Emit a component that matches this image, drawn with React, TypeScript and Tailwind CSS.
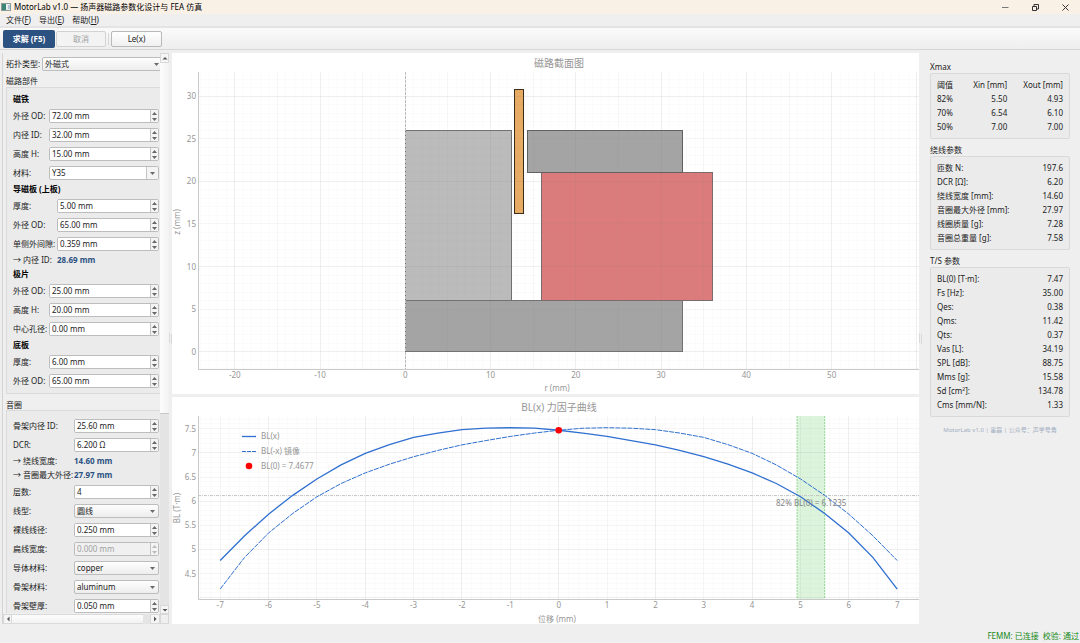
import React, { useId } from 'react';
import clsx from 'clsx';

const range = (from: number, to: number, step: number) =>
  Array.from({ length: Math.round((to - from) / step) + 1 }, (_, i) => from + i * step);

/* ---------- Form controls ---------- */

interface RowProps {
  label: string;
  labelClass: string;
  children: (id: string) => React.ReactNode;
}

const Row: React.FC<RowProps> = ({ label, labelClass, children }) => {
  const id = useId();
  return (
    <div className="flex h-3.5 items-center">
      <label htmlFor={id} className={clsx('shrink-0 whitespace-nowrap', labelClass)}>
        {label}
      </label>
      {children(id)}
    </div>
  );
};

interface FieldProps {
  label: string;
  value: string;
  labelClass: string;
  disabled?: boolean;
}

const SpinField: React.FC<FieldProps> = ({ label, value, labelClass, disabled }) => (
  <Row label={label} labelClass={labelClass}>
    {(id) => (
      <div className="flex h-3.5 min-w-0 flex-1 overflow-hidden rounded-xs border border-[#bdbdbd] bg-white">
        <input
          id={id}
          type="text"
          defaultValue={value}
          disabled={disabled}
          className="min-w-0 flex-1 bg-white pl-0.5 leading-3 outline-none disabled:bg-[#f0f0f0] disabled:text-[#a0a0a0]"
        />
        <div className="flex w-2 shrink-0 flex-col border-l border-[#c4c4c4] bg-[#f4f4f4]">
          <button type="button" aria-label={`${label} +`} disabled={disabled} className="flex flex-1 items-center justify-center text-[#666] disabled:text-[#bbb]">
            <svg width="5" height="3" viewBox="0 0 5 3"><path d="M0 3 2.500 0 5 3z" fill="currentColor" /></svg>
          </button>
          <button type="button" aria-label={`${label} -`} disabled={disabled} className="flex flex-1 items-center justify-center text-[#666] disabled:text-[#bbb]">
            <svg width="5" height="3" viewBox="0 0 5 3"><path d="M0 0 2.500 3 5 0z" fill="currentColor" /></svg>
          </button>
        </div>
      </div>
    )}
  </Row>
);

interface SelectFieldProps extends FieldProps {
  editable?: boolean;
  grow?: string;
}

const SelectField: React.FC<SelectFieldProps> = ({ label, value, labelClass, editable, grow = 'flex-1 min-w-0' }) => (
  <Row label={label} labelClass={labelClass}>
    {(id) => (
      <div className={clsx('relative h-3.5', grow)}>
        <select
          id={id}
          defaultValue={value}
          className={clsx(
            'block h-full w-full appearance-none rounded-xs border border-[#bdbdbd] pl-0.5 outline-none',
            editable ? 'bg-white' : 'bg-linear-to-b from-[#fefefe] to-[#ededed]'
          )}
        >
          <option>{value}</option>
        </select>
        <span
          className={clsx(
            'pointer-events-none absolute inset-y-px right-px flex items-center justify-center',
            editable ? 'w-3 border-l border-[#c4c4c4] bg-[#f4f4f4]' : 'w-3'
          )}
        >
          <svg width="5" height="3" viewBox="0 0 5 3"><path d="M0 0 2.5 3 5 0z" fill="#6a6a6a" /></svg>
        </span>
      </div>
    )}
  </Row>
);

const SubHeading: React.FC<{ children: React.ReactNode }> = ({ children }) => (
  <h3 className="h-[9px] font-bold leading-[7px] text-black">{children}</h3>
);

const Derived: React.FC<{ label: string; value: string; labelClass: string }> = ({ label, value, labelClass }) => (
  <div className="flex h-[9px] whitespace-nowrap leading-[7px]">
    <span className={clsx('shrink-0', labelClass)}>{label}</span>
    <output className="font-bold text-[#2c5282]">{value}</output>
  </div>
);

/* ---------- Sidebar ---------- */

const Arrow: React.FC<{ d: string }> = ({ d }) => (
  <svg width="6" height="6" viewBox="0 0 6 6"><path d={d} fill="#555" /></svg>
);

const scrollButton = 'flex shrink-0 items-center justify-center border border-[#d8d8d8] bg-[#f5f5f5]';

const Sidebar: React.FC = () => (
  <aside className="ml-0.5 flex w-[167px] shrink-0 flex-col border-l border-[#d4d4d4]">
    <div className="flex flex-1">
      <div className="min-w-0 flex-1 overflow-hidden pt-1 pl-[3px]">
        <SelectField label="拓扑类型:" value="外磁式" labelClass="w-[36px]" grow="w-[121px] shrink-0" />

        <h2 className="mt-[5px] mb-px leading-[10px]">磁路部件</h2>
        <div className="flex flex-col gap-[5px] border-y border-l border-[#dadada] bg-[#ebebeb] pt-[7px] pr-px pb-[5px] pl-1.5">
          <SubHeading>磁铁</SubHeading>
          <SpinField label="外径 OD:" value="72.00 mm" labelClass="w-9" />
          <SpinField label="内径 ID:" value="32.00 mm" labelClass="w-9" />
          <SpinField label="高度 H:" value="15.00 mm" labelClass="w-9" />
          <SelectField label="材料:" value="Y35" labelClass="w-9" editable />
          <SubHeading>导磁板 (上板)</SubHeading>
          <SpinField label="厚度:" value="5.00 mm" labelClass="w-11" />
          <SpinField label="外径 OD:" value="65.00 mm" labelClass="w-11" />
          <SpinField label="单侧外间隙:" value="0.359 mm" labelClass="w-11" />
          <Derived label="→ 内径 ID:" value="28.69 mm" labelClass="w-11" />
          <SubHeading>极片</SubHeading>
          <SpinField label="外径 OD:" value="25.00 mm" labelClass="w-9" />
          <SpinField label="高度 H:" value="20.00 mm" labelClass="w-9" />
          <SpinField label="中心孔径:" value="0.00 mm" labelClass="w-9" />
          <SubHeading>底板</SubHeading>
          <SpinField label="厚度:" value="6.00 mm" labelClass="w-9" />
          <SpinField label="外径 OD:" value="65.00 mm" labelClass="w-9" />
        </div>

        <h2 className="mt-1.5 leading-[10px]">音圈</h2>
        <div className="flex flex-col gap-[5px] border-t border-l border-[#dadada] bg-[#ebebeb] pt-2 pr-px pl-1.5">
          <SpinField label="骨架内径 ID:" value="25.60 mm" labelClass="w-[61px]" />
          <SpinField label="DCR:" value="6.200 Ω" labelClass="w-[61px]" />
          <Derived label="→ 绕线宽度:" value="14.60 mm" labelClass="w-[61px]" />
          <Derived label="→ 音圈最大外径:" value="27.97 mm" labelClass="w-[61px]" />
          <SpinField label="层数:" value="4" labelClass="w-[61px]" />
          <SelectField label="线型:" value="圆线" labelClass="w-[61px]" />
          <SpinField label="裸线线径:" value="0.250 mm" labelClass="w-[61px]" />
          <SpinField label="扁线宽度:" value="0.000 mm" labelClass="w-[61px]" disabled />
          <SelectField label="导体材料:" value="copper" labelClass="w-[61px]" />
          <SelectField label="骨架材料:" value="aluminum" labelClass="w-[61px]" />
          <SpinField label="骨架壁厚:" value="0.050 mm" labelClass="w-[61px]" />
        </div>
      </div>
      <div className="flex w-[9px] shrink-0 flex-col bg-[#e4e4e4]">
        <button type="button" aria-label="向上滚动" className={clsx(scrollButton, 'h-2.5')}><Arrow d="M.5 4.500 3 2 5.500 4.500z" /></button>
        <div className="h-[351px] border-b border-[#c8c8c8] bg-linear-to-r from-[#fdfdfd] to-[#f2f2f2]" />
        <button type="button" aria-label="向下滚动" className={clsx(scrollButton, 'mt-auto h-[9px]')}><Arrow d="M.5 2 3 4.500 5.500 2z" /></button>
      </div>
    </div>
    <div className="flex h-2.5 bg-[#e4e4e4]">
      <button type="button" aria-label="向左滚动" className={clsx(scrollButton, 'w-[9px]')}><Arrow d="M4.500 .5 2 3 4.500 5.500z" /></button>
      <div className="flex-1 border-y border-[#dadada] bg-linear-to-b from-[#fdfdfd] to-[#f2f2f2]" />
      <div className="w-[7px]" />
      <button type="button" aria-label="向右滚动" className={clsx(scrollButton, 'w-2.5')}><Arrow d="M2 .5 4.500 3 2 5.500z" /></button>
      <div className="w-[9px] border border-[#d8d8d8] bg-[#efefef]" />
    </div>
  </aside>
);

/* ---------- Charts ---------- */

interface GridProps {
  xs: number[];
  ys: number[];
  left: number;
  right: number;
  top: number;
  bottom: number;
  opacity: number;
}

const Grid: React.FC<GridProps> = ({ xs, ys, left, right, top, bottom, opacity }) => (
  <g stroke="#808080" strokeOpacity={opacity} shapeRendering="crispEdges">
    {xs.map((x) => <line key={`x${x}`} x1={x} x2={x} y1={top} y2={bottom} />)}
    {ys.map((y) => <line key={`y${y}`} x1={left} x2={right} y1={y} y2={y} />)}
  </g>
);

const parts = [
  { name: 'bottom', r: [0, 32.5], z: [0, 6], fill: '#a4a4a4', stroke: '#707070' },
  { name: 'pole', r: [0, 12.5], z: [6, 26], fill: '#bbbbbb', stroke: '#707070' },
  { name: 'magnet', r: [16, 36], z: [6, 21], fill: '#db7b7b', stroke: '#7c6a6a' },
  { name: 'top', r: [14.35, 32.5], z: [21, 26], fill: '#a4a4a4', stroke: '#606060' },
  { name: 'coil', r: [12.8, 13.9], z: [16.2, 30.8], fill: '#e7ab63', stroke: '#3a2c1a' },
];

const SectionChart: React.FC = () => {
  const rx = (r: number) => 233.3 + r * 8.527;
  const zy = (z: number) => 298.7 - z * 8.52;
  const box = { left: 26, right: 747, top: 19, bottom: 316 };
  return (
    <svg viewBox="0 0 747 341" className="block h-auto w-full bg-white text-[8px]" role="img" aria-label="磁路截面图">
      <text x="387" y="14" textAnchor="middle" fontSize="10" fill="#969696">磁路截面图</text>
      {parts.map((p) => (
        <rect
          key={p.name}
          x={rx(p.r[0])}
          y={zy(p.z[1])}
          width={rx(p.r[1]) - rx(p.r[0])}
          height={zy(p.z[0]) - zy(p.z[1])}
          fill={p.fill}
          stroke={p.stroke}
          shapeRendering="crispEdges"
        />
      ))}
      <Grid {...box} xs={range(-24, 60, 1).map(rx)} ys={range(-2, 32, 1).map(zy)} opacity={0.035} />
      <Grid {...box} xs={range(-20, 60, 5).map(rx)} ys={range(0, 30, 5).map(zy)} opacity={0.045} />
      <Grid {...box} xs={range(-20, 60, 10).map(rx)} ys={range(0, 30, 10).map(zy)} opacity={0.06} />
      <line x1={rx(0)} x2={rx(0)} y1={box.top} y2={box.bottom} stroke="#bdbdbd" strokeDasharray="3 1" shapeRendering="crispEdges" />
      <path d={`M26.5 ${box.top}V316.5H747`} fill="none" stroke="#c9c9c9" />
      <g fill="#969696">
        {range(-20, 50, 10).map((r) => <text key={r} x={rx(r)} y="325" textAnchor="middle">{r}</text>)}
        {range(0, 30, 5).map((z) => <text key={z} x="24" y={zy(z) + 3} textAnchor="end">{z}</text>)}
        <text x="385" y="338" textAnchor="middle">r (mm)</text>
        <text transform="translate(8 169) rotate(-90)" textAnchor="middle">z (mm)</text>
      </g>
    </svg>
  );
};

// BL samples from x = -7 to 7 mm, one every 0.5 mm
const bl = [
  4.77, 5.28, 5.73, 6.12, 6.46, 6.75, 6.99, 7.17, 7.32, 7.41, 7.48, 7.51, 7.52, 7.51, 7.4677,
  7.41, 7.34, 7.255, 7.165, 7.05, 6.92, 6.765, 6.585, 6.365, 6.09, 5.745, 5.34, 4.83, 4.18,
];

const BlChart: React.FC = () => {
  const px = (x: number) => 386.7 + x * 48.36;
  const py = (v: number) => 31.7 + (7.5 - v) * 48.3;
  const toPoints = (values: number[]) => values.map((v, i) => `${px(-7 + i * 0.5)},${py(v)}`).join(' ');
  const box = { left: 26, right: 747, top: 19, bottom: 202 };
  return (
    <svg viewBox="0 0 747 227" className="block h-auto w-full bg-white text-[8px]" role="img" aria-label="BL(x) 力因子曲线">
      <text x="387" y="14" textAnchor="middle" fontSize="10" fill="#969696">BL(x) 力因子曲线</text>
      <rect x={px(4.93)} y="19" width={px(5.5) - px(4.93)} height="183" fill="#dcf4dc" />
      <g stroke="#90d890" strokeDasharray="2 1">
        <line x1={px(4.93)} x2={px(4.93)} y1="19" y2="202" />
        <line x1={px(5.5)} x2={px(5.5)} y1="19" y2="202" />
      </g>
      <Grid {...box} xs={range(-7.4, 7.6, 0.2).map(px)} ys={range(4, 7.7, 0.1).map(py)} opacity={0.035} />
      <Grid {...box} xs={range(-7, 7, 1).map(px)} ys={range(4, 7.5, 0.5).map(py)} opacity={0.05} />
      <Grid {...box} xs={range(-6, 6, 2).map(px)} ys={range(4, 7, 1).map(py)} opacity={0.05} />
      <line x1="26" x2="747" y1="98.5" y2="98.5" stroke="#c8c8c8" strokeDasharray="3 1 1 1" />
      <polyline points={toPoints(bl)} fill="none" stroke="#2f6fd0" strokeWidth="1.3" />
      <polyline points={toPoints([...bl].reverse())} fill="none" stroke="#2f6fd0" strokeDasharray="5 1" />
      <circle cx={px(0)} cy={py(7.4677)} r="3.3" fill="#f00" />
      <text x="604" y="109" fill="#848484">82% BL(0) = 6.1235</text>
      <path d={`M26.5 ${box.top}V202.5H747`} fill="none" stroke="#c9c9c9" />
      <g fill="#969696">
        {range(-7, 7, 1).map((x) => <text key={x} x={px(x)} y="211" textAnchor="middle">{x}</text>)}
        {range(4.5, 7.5, 0.5).map((v) => <text key={v} x="24" y={py(v) + 3} textAnchor="end">{v}</text>)}
        <text x="385" y="225" textAnchor="middle">位移 (mm)</text>
        <text transform="translate(8 111) rotate(-90)" textAnchor="middle">BL (T·m)</text>
        <text x="89" y="42">BL(x)</text>
        <text x="89" y="57">BL(-x) 镜像</text>
        <text x="89" y="72">BL(0) = 7.4677</text>
      </g>
      <line x1="70" x2="84" y1="39.5" y2="39.5" stroke="#2f6fd0" strokeWidth="1.3" />
      <line x1="70" x2="84" y1="54.5" y2="54.5" stroke="#2f6fd0" strokeDasharray="4 1" />
      <circle cx="77" cy="69" r="3.3" fill="#f00" />
    </svg>
  );
};

/* ---------- Result panel ---------- */

const xmaxRows = [
  ['82%', '5.50', '4.93'],
  ['70%', '6.54', '6.10'],
  ['50%', '7.00', '7.00'],
];

const windingRows = [
  ['匝数 N:', '197.6'],
  ['DCR [Ω]:', '6.20'],
  ['绕线宽度 [mm]:', '14.60'],
  ['音圈最大外径 [mm]:', '27.97'],
  ['线圈质量 [g]:', '7.28'],
  ['音圈总重量 [g]:', '7.58'],
];

const tsRows = [
  ['BL(0) [T·m]:', '7.47'],
  ['Fs [Hz]:', '35.00'],
  ['Qes:', '0.38'],
  ['Qms:', '11.42'],
  ['Qts:', '0.37'],
  ['Vas [L]:', '34.19'],
  ['SPL [dB]:', '88.75'],
  ['Mms [g]:', '15.58'],
  ['Sd [cm²]:', '134.78'],
  ['Cms [mm/N]:', '1.33'],
];

const ResultGroup: React.FC<{ title: string; children: React.ReactNode }> = ({ title, children }) => (
  <section>
    <h2 className="mb-px leading-[10px]">{title}</h2>
    <div className="rounded-xs border border-[#d9d9d9] bg-[#ebebeb] px-1.5 py-1">{children}</div>
  </section>
);

const ValueTable: React.FC<{ rows: string[][] }> = ({ rows }) => (
  <table className="w-full whitespace-nowrap">
    <tbody>
      {rows.map(([name, value]) => (
        <tr key={name} className="h-3.5">
          <th scope="row" className="p-0 text-left font-normal">{name}</th>
          <td className="p-0 text-right">{value}</td>
        </tr>
      ))}
    </tbody>
  </table>
);

const Results: React.FC = () => (
  <aside className="mr-2.5 flex w-[140px] shrink-0 flex-col gap-1.5 pt-[9px]">
    <ResultGroup title="Xmax">
      <table className="w-full whitespace-nowrap">
        <thead>
          <tr className="h-3.5">
            <th className="p-0 text-left font-normal">阈值</th>
            <th className="p-0 text-right font-normal">Xin [mm]</th>
            <th className="p-0 text-right font-normal">Xout [mm]</th>
          </tr>
        </thead>
        <tbody>
          {xmaxRows.map(([level, xin, xout]) => (
            <tr key={level} className="h-3.5">
              <th scope="row" className="p-0 text-left font-normal">{level}</th>
              <td className="p-0 text-right">{xin}</td>
              <td className="p-0 text-right">{xout}</td>
            </tr>
          ))}
        </tbody>
      </table>
    </ResultGroup>
    <ResultGroup title="绕线参数"><ValueTable rows={windingRows} /></ResultGroup>
    <ResultGroup title="T/S 参数"><ValueTable rows={tsRows} /></ResultGroup>
    <p className="text-center text-[6px] leading-3.5 whitespace-nowrap text-[#9fadc2]">
      MotorLab v1.0 | 辜磊 | 公众号：声学号角
    </p>
  </aside>
);

/* ---------- Window ---------- */

const menus = [
  ['文件', 'F'],
  ['导出', 'E'],
  ['帮助', 'H'],
];

const SplitterDots: React.FC = () => (
  <svg width="3" height="12" viewBox="0 0 3 12" className="shrink-0">
    {range(1, 9, 2).map((y) => <path key={y} d={`M0 ${y}h1M2 ${y + 1}h1`} stroke="#c4c4c4" />)}
  </svg>
);

const App: React.FC = () => (
  <div className="flex min-h-screen flex-col bg-[#efefef] font-['Noto_Sans','Noto_Sans_CJK_SC',sans-serif] text-[8px] leading-[10px] text-[#222]">
    <header className="flex h-3.5 items-center bg-[#f9f0e6] text-black">
      <svg width="10" height="8" viewBox="0 0 10 8" className="ml-px shrink-0">
        <rect x=".5" y=".5" width="9" height="7" fill="#e9f1ee" stroke="#8a9a9a" />
        <rect x="1" y="1" width="4" height="6" fill="#3b8575" />
        <rect x="7" y="2" width="2" height="4" fill="#b5c4d4" />
      </svg>
      <h1 className="ml-[3px] flex-1">MotorLab v1.0 — 扬声器磁路参数化设计与 FEA 仿真</h1>
      <div className="flex">
        <button type="button" aria-label="最小化" className="flex w-[29px] items-center justify-center">
          <svg width="7" height="7" viewBox="0 0 7 7"><path d="M0 3.5h6.500" stroke="#777" /></svg>
        </button>
        <button type="button" aria-label="还原" className="flex w-[30px] items-center justify-center">
          <svg width="7" height="7" viewBox="0 0 7 7" fill="none" stroke="#333"><path d="M.5 2.500h4v4h-4zM2 2.500V.5h4.500V5h-2" /></svg>
        </button>
        <button type="button" aria-label="关闭" className="flex w-[30px] items-center justify-center">
          <svg width="7" height="7" viewBox="0 0 7 7"><path d="m.5.5 6 6m0-6-6 6" stroke="#333" /></svg>
        </button>
      </div>
    </header>

    <nav className="flex h-3.5 items-center gap-2 border-b-2 border-[#e4e4e4] pl-1.5">
      {menus.map(([name, key]) => (
        <button key={key} type="button">{name}(<u>{key}</u>)</button>
      ))}
    </nav>

    <div className="flex h-[22px] items-center border-b border-[#d6d6d6] bg-linear-to-b from-[#fafafa] to-[#eeeeee] pl-[3px]">
      <button type="button" className="h-[18px] w-[52px] rounded-xs bg-[#2c5282] font-bold text-white">求解 (F5)</button>
      <button type="button" disabled className="ml-px h-4 w-[50px] rounded-xs border border-[#d2d2d2] bg-[#f3f3f3] text-[#a0a0a0]">取消</button>
      <span className="mx-0.5 h-3 w-px bg-[#d6d6d6]" />
      <button type="button" className="h-4 w-[51px] rounded-xs border border-[#b9b9b9] bg-linear-to-b from-white to-[#f0f0f0]">Le(x)</button>
    </div>

    <main className="flex pt-[3px]">
      <Sidebar />
      <div className="flex w-[3px] shrink-0 items-center"><SplitterDots /></div>
      <div className="flex min-w-0 flex-1 flex-col gap-[3px]">
        <SectionChart />
        <BlChart />
      </div>
      <div className="flex w-[11px] shrink-0 items-center"><SplitterDots /></div>
      <Results />
    </main>

    <footer className="mt-auto flex h-[19px] items-end justify-end gap-1 pr-px pb-0.5 text-[#178a17]">
      <span>FEMM: 已连接</span>
      <span>校验: 通过</span>
    </footer>
  </div>
);

export default App;
